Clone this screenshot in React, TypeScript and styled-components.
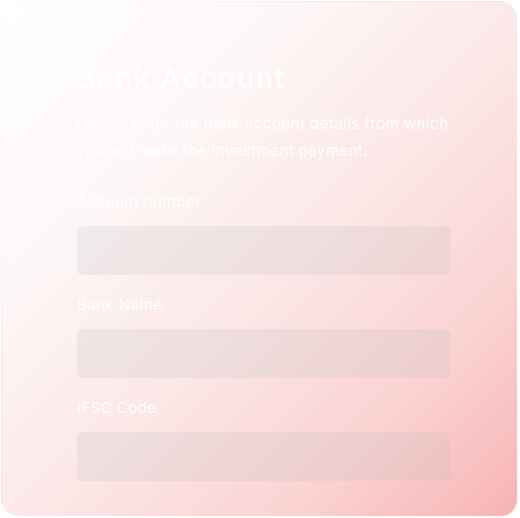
import React from 'react';
import styled, { createGlobalStyle } from 'styled-components';

const fields = ['Account number', 'Bank Name', 'IFSC Code'];

export default function App() {
  return (
    <>
      <GlobalStyle />
      <Page>
        <Card>
          <Title>Bank Account</Title>
          <Description>
            Please enter the bank account details from which you will make the investment payment.
          </Description>
          <Form>
            {fields.map((label) => (
              <Field key={label}>
                <Label>{label}</Label>
                <Input type="text" aria-label={label} />
              </Field>
            ))}
          </Form>
        </Card>
      </Page>
    </>
  );
}

const GlobalStyle = createGlobalStyle`
  html, body {
    margin: 0;
    padding: 0;
    background: #ffffff;
  }
  body {
    font-family: Inter, "Open Sans", "Liberation Sans", sans-serif;
  }
`;

const Page = styled.div`
  width: 520px;
  height: 518px;
  padding: 1px 0 0 1px;
  box-sizing: border-box;
`;

const Card = styled.div`
  width: 517px;
  height: 516px;
  box-sizing: border-box;
  padding: 56px 50px 0 75px;
  border: 1px solid rgba(255, 255, 255, 0.6);
  border-radius: 18px;
  background: linear-gradient(
    135deg,
    #ffffff 0%,
    #fdf6f6 30%,
    #fce6e6 55%,
    #fbd2d2 78%,
    #f7b3b3 100%
  );
  color: #ffffff;
  display: flex;
  flex-direction: column;
`;

const Title = styled.h1`
  margin: 0;
  font-size: 28px;
  line-height: 40px;
  font-weight: 500;
  letter-spacing: 1.9px;
`;

const Description = styled.p`
  margin: 12px 0 0;
  max-width: 380px;
  font-size: 15px;
  line-height: 27px;
  font-weight: 400;
  letter-spacing: 0.45px;
`;

const Form = styled.div`
  margin-top: 28px;
  display: flex;
  flex-direction: column;
  gap: 20px;
`;

const Field = styled.div`
  display: flex;
  flex-direction: column;
  gap: 14px;
`;

const Label = styled.label`
  font-size: 15px;
  line-height: 20px;
  font-weight: 400;
  letter-spacing: 0.45px;
`;

const Input = styled.input`
  width: 373px;
  height: 49px;
  box-sizing: border-box;
  border: none;
  border-radius: 6px;
  background: rgba(190, 190, 190, 0.2);
  outline: none;
  padding: 0 14px;
  font: inherit;
  color: #ffffff;
`;
